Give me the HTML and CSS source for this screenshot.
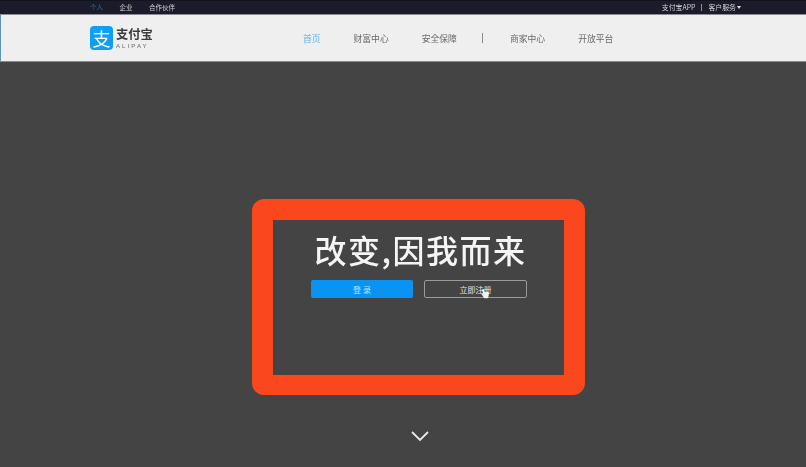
FILE: index.html
```html
<!DOCTYPE html>
<html lang="zh-CN">
<head>
<meta charset="utf-8">
<title>支付宝</title>
<link rel="stylesheet" href="styles.css">
</head>
<body>
<header class="topbar">
  <nav class="top-links">
    <span class="top-link active">个人</span>
    <span class="top-link">企业</span>
    <span class="top-link">合作伙伴</span>
  </nav>
  <div class="top-right">
    <span>支付宝APP</span>
    <i class="top-sep"></i>
    <span>客户服务</span>
    <i class="caret"></i>
  </div>
</header>
<div class="navbar">
  <div class="logo">
    <div class="logo-icon">支</div>
    <div class="logo-text">
      <div class="logo-cn">支付宝</div>
      <div class="logo-en">ALIPAY</div>
    </div>
  </div>
  <nav class="main-nav">
    <span class="nav-item current">首页</span>
    <span class="nav-item">财富中心</span>
    <span class="nav-item">安全保障</span>
    <i class="nav-sep"></i>
    <span class="nav-item">商家中心</span>
    <span class="nav-item">开放平台</span>
  </nav>
</div>
<main class="hero">
  <section class="frame">
    <h1 class="slogan">改变,因我而来</h1>
    <div class="actions">
      <a class="btn btn-primary">登 录</a>
      <a class="btn btn-outline">立即注册
        <svg class="cursor" width="9" height="11" viewBox="0 0 9 11"><path d="M1.5 1.2c.8-.5 1.4 0 1.6.8l.5 2 3-.2c1 0 1.6.7 1.4 1.7L7.4 9c-.2.9-.7 1.3-1.5 1.3H4.2c-.7 0-1.100-.3-1.500-.9L.6 6.200c-.3-.6.300-1.100.8-.8l1 .8L1 2.500c-.2-.5 0-1 .5-1.300z" fill="#f2f2f2"/></svg>
      </a>
    </div>
  </section>
  <svg class="chevron" width="20" height="12" viewBox="0 0 20 12"><path d="M2 2l8 8 8-8" fill="none" stroke="#e8e8e8" stroke-width="1.800"/></svg>
</main>
</body>
</html>
```

FILE: styles.css
```css
* { box-sizing: border-box; }
html, body { margin: 0; height: 100%; }
body {
  width: 806px;
  height: 467px;
  overflow: hidden;
  display: flex;
  flex-direction: column;
  background: #444444;
  font-family: "Noto Sans CJK SC", "Liberation Sans", sans-serif;
}
.topbar {
  flex: 0 0 15px;
  display: flex;
  justify-content: space-between;
  align-items: center;
  padding: 0 65px 1px 90px;
  background: #1b1b2b;
  border-top: 1px solid #10141c;
  border-bottom: 1px solid #8c8c98;
  font-size: 6.500px;
  color: #d2d2d6;
}
.top-links { display: flex; gap: 16.500px; filter: blur(0.4px); }
.top-link.active { color: #1f6f9f; }
.top-right { display: flex; align-items: center; gap: 6px; font-size: 6.900px; filter: blur(0.4px); }
.top-sep { width: 1px; height: 7px; background: #8f8f98; }
.caret {
  margin-left: -5px;
  border: 2.500px solid transparent;
  border-top: 3px solid #e0e0e4;
  border-bottom: 0;
}
.navbar {
  flex: 0 0 47px;
  display: flex;
  align-items: center;
  padding-left: 90px;
  background: #efefef;
  border-left: 1px solid #5f93b8;
  border-bottom: 1px solid #8a8a8a;
}
.logo { display: flex; align-items: center; gap: 3px; margin-left: -1px; filter: blur(0.35px); }
.logo-icon {
  width: 23px;
  height: 24px;
  display: flex;
  align-items: center;
  justify-content: center;
  border-radius: 4px;
  background: #0e9ff0;
  color: #ffffff;
  font-size: 18px;
  line-height: 1;
}
.logo-text { display: flex; flex-direction: column; align-items: flex-start; }
.logo-cn { font-size: 12.300px; line-height: 15px; font-weight: 700; color: #3c3c3c; }
.logo-en {
  font-family: "Liberation Sans", sans-serif;
  font-size: 6px;
  line-height: 8px;
  letter-spacing: 2.100px;
  color: #666666;
}
.main-nav {
  display: flex;
  align-items: center;
  margin-left: 150px;
  gap: 33px;
  font-size: 8.800px;
  color: #6a6a6a;
  filter: blur(0.4px);
}
.nav-item.current { color: #5cb2ea; }
.nav-sep { width: 1px; height: 10px; margin: 0 -6px 0 -8px; background: #8a8a8a; }
.hero {
  flex: 1;
  display: flex;
  flex-direction: column;
  align-items: flex-start;
  padding: 137px 0 0 252px;
}
.frame {
  width: 333px;
  height: 196px;
  padding-top: 10px;
  display: flex;
  flex-direction: column;
  align-items: center;
  border: 21px solid #fb471e;
  border-bottom-width: 20px;
  border-radius: 12px;
  background-clip: padding-box;
}
.slogan {
  margin: -1px 0 1px 4px;
  font-size: 32px;
  line-height: 40px;
  font-weight: 500;
  letter-spacing: 1.500px;
  white-space: nowrap;
  color: #f5f5f5;
  filter: blur(0.4px);
}
.actions { display: flex; gap: 11px; margin: 10px 0 0 1px; }
.btn {
  position: relative;
  width: 102px;
  height: 18px;
  display: flex;
  align-items: center;
  justify-content: center;
  border-radius: 2px;
  font-size: 8px;
  color: #e8e8e8;
}
.btn-primary { background: #0b93f4; color: #bfe4fb; }
.btn-outline { width: 103px; border: 1px solid #9a9a9a; }
.cursor { position: absolute; left: 56px; top: 7px; }
.chevron { margin: 35px 0 0 158px; }
```
